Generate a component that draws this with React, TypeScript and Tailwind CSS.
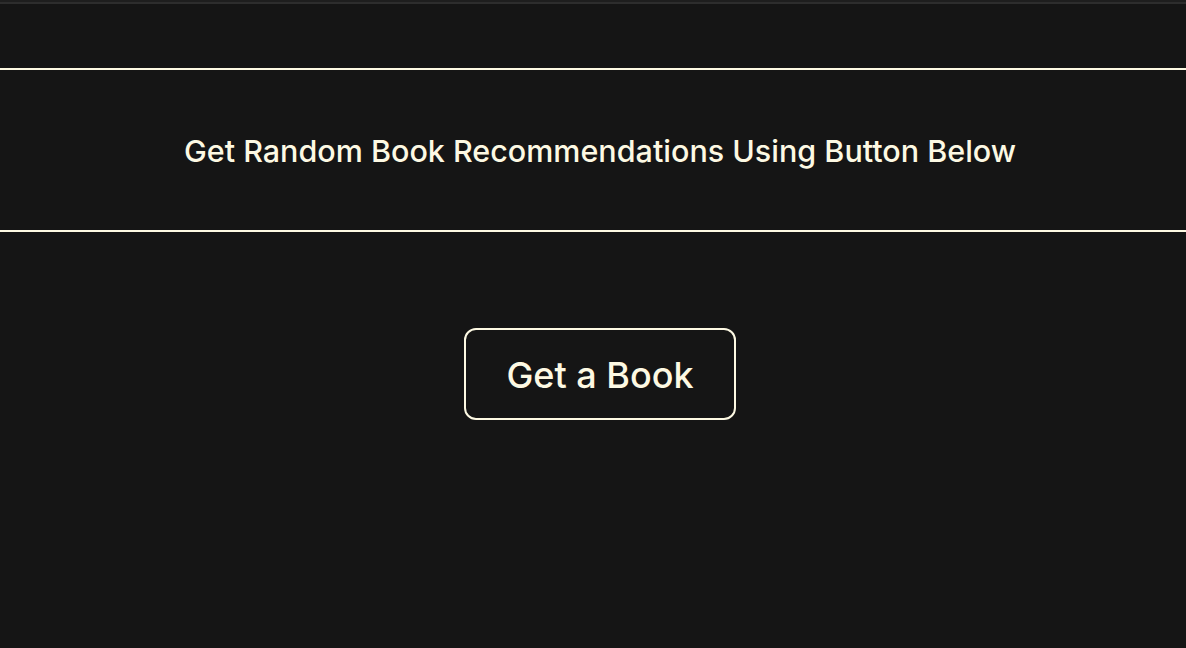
export default function App() {
  return (
    <div
      className="min-h-[648px] w-full bg-[#151515] text-[#fdf9e3] flex flex-col"
      style={{ fontFamily: "Inter, 'Noto Sans', sans-serif" }}
    >
      <div className="h-[2px] bg-[#1e1e1e]" />
      <div className="h-[2px] bg-[#2d2d2d]" />
      <div className="h-[64px]" />
      <div className="h-[2px] bg-[#fdf9e3]" />
      <div className="h-[160px] flex items-center justify-center pl-[14px] pt-[2px]">
        <h1 className="text-[30.5px] font-medium">
          Get Random Book Recommendations Using Button Below
        </h1>
      </div>
      <div className="h-[2px] bg-[#fdf9e3]" />
      <div className="flex justify-center pt-[96px] pl-[14px]">
        <button className="w-[272px] h-[92px] border-2 border-[#fdf9e3] rounded-[12px] text-[36px] font-medium text-[#fdf9e3] pt-[2px]">
          Get a Book
        </button>
      </div>
    </div>
  );
}
